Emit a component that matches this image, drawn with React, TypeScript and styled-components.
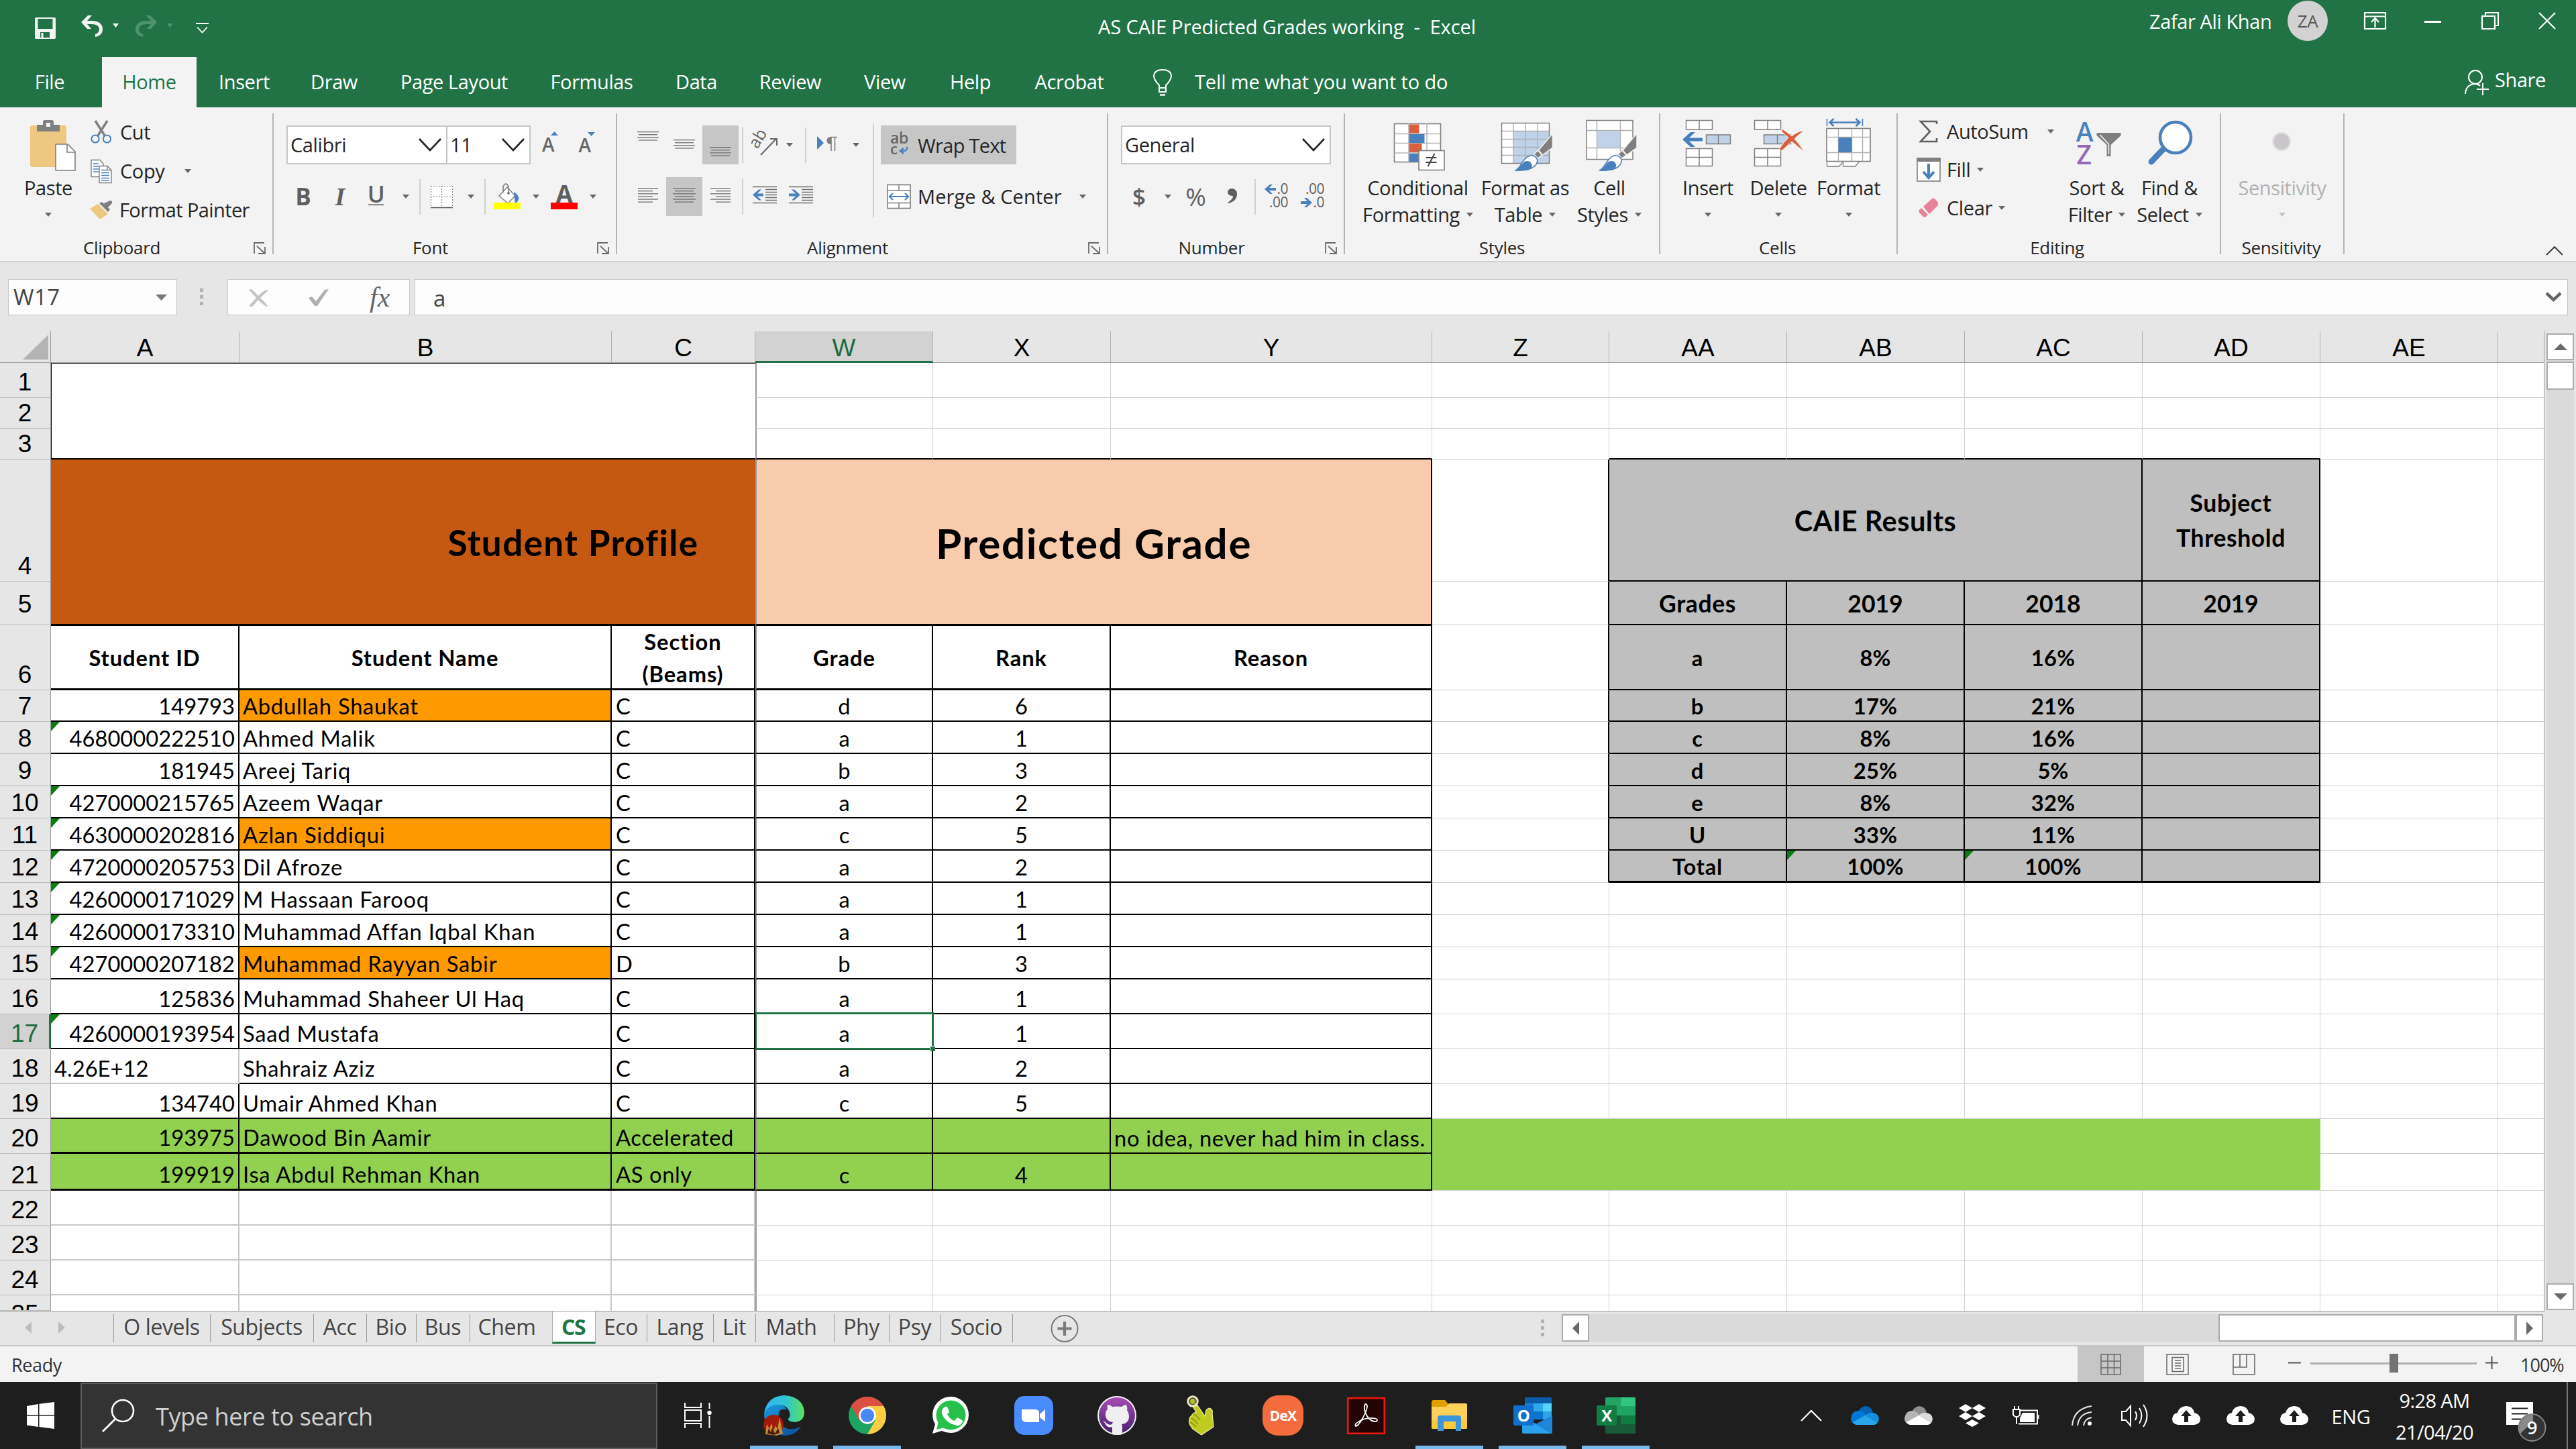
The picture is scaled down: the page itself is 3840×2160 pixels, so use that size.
import React from 'react';
import styled, { createGlobalStyle, css } from 'styled-components';

const UI = `"Open Sans", "Noto Sans", sans-serif`;
const CELL = `Lato, "Open Sans", sans-serif`;
const HEAD = `"Liberation Sans", Arial, sans-serif`;
const GREEN = '#217346';
const BLUE = '#4a80bb';
const GRAY = '#7f7f7f';

const Global = createGlobalStyle`
  *, *::before, *::after { box-sizing: border-box; }
  html, body { margin: 0; padding: 0; background: #1e1e1e; }
  body { font-family: ${UI}; font-size: 29px; letter-spacing: -0.4px; color: #262626; }
  svg { display: block; flex: none; overflow: visible; }
`;

const Window = styled.div`
  width: 3840px;
  height: 2160px;
  display: flex;
  flex-direction: column;
  overflow: hidden;
  white-space: nowrap;
  background: #e6e6e6;
`;

/* ---------- small shared parts ---------- */

interface IcoProps {
  box: [number, number, number, number];
  ml?: number;
  children: React.ReactNode;
}
const Svg = styled.svg<{ $ml?: number }>`
  margin-left: ${p => p.$ml ?? 0}px;
`;
const Ico = ({ box, ml, children }: IcoProps) => (
  <Svg $ml={ml} width={box[2]} height={box[3]} viewBox={box.join(' ')}>{children}</Svg>
);

const Caret = ({ ml, color = '#666' }: { ml?: number; color?: string }) => (
  <Svg $ml={ml} width={10} height={6} viewBox="0 0 10 6"><path d="M0 0h10L5 6z" fill={color} /></Svg>
);

/* ---------- title bar ---------- */

const TitleBar = styled.header`
  height: 85px;
  flex: none;
  display: flex;
  background: ${GREEN};
  color: #fff;
`;
const QuickAccess = styled.div`
  display: flex;
  align-items: flex-start;
  width: 1637px;
`;
const Title = styled.div`
  width: 1567px;
  line-height: 40px;
  padding-top: 20px;
  white-space: pre;
  letter-spacing: -0.1px;
`;
const Account = styled.div`
  width: 206px;
  line-height: 40px;
  padding-top: 12px;
`;
const Avatar = styled.div`
  width: 60px;
  height: 60px;
  margin-top: 1px;
  border-radius: 50%;
  background: #d2d2d2;
  color: #555;
  font-size: 26px;
  line-height: 60px;
  text-align: center;
`;

const TabBar = styled.nav`
  height: 75px;
  flex: none;
  display: flex;
  background: ${GREEN};
  color: #fff;
`;
const Tab = styled.div<{ $w: number; $on?: boolean }>`
  width: ${p => p.$w}px;
  text-align: center;
  line-height: 73px;
  ${p => p.$on && css`background: #f3f3f3; color: ${GREEN};`}
`;
const TellMe = styled.div`
  margin-left: 34px;
  line-height: 73px;
  width: 1893px;
  letter-spacing: -0.15px;
`;
const Share = styled.div`
  line-height: 68px;
  margin-left: 8px;
`;

/* ---------- ribbon ---------- */

const Ribbon = styled.section`
  height: 231px;
  flex: none;
  display: flex;
  padding-top: 9px;
  background: #f3f3f3;
  border-bottom: 2px solid #d2d2d2;
`;
const Group = styled.div<{ $w: number }>`
  width: ${p => p.$w}px;
  height: 210px;
  border-right: 2px solid #b4b4b4;
`;
const Body = styled.div<{ $pl?: number }>`
  height: 190px;
  display: flex;
  align-items: flex-start;
  padding-left: ${p => p.$pl ?? 0}px;
`;
const Foot = styled.div`
  height: 20px;
  line-height: 20px;
  display: flex;
  font-size: 26px;
  letter-spacing: -0.3px;
`;
const FootText = styled.div<{ $pr?: number }>`
  flex: 1;
  text-align: center;
  padding-right: ${p => p.$pr ?? 0}px;
`;
const Launch = styled.div`
  width: 43px;
  padding: 2px 0 0 15px;
`;
const Stack = styled.div<{ $mt?: number; $gap?: number; $w?: number }>`
  display: flex;
  flex-direction: column;
  margin-top: ${p => p.$mt ?? 0}px;
  gap: ${p => p.$gap ?? 0}px;
  ${p => p.$w && css`width: ${p.$w}px;`}
`;
const Line = styled.div<{ $h?: number }>`
  display: flex;
  align-items: center;
  height: ${p => p.$h ?? 58}px;
  line-height: 40px;
`;
const Word = styled.span<{ $ml?: number; $w?: number; $ls?: number }>`
  margin-left: ${p => p.$ml ?? 0}px;
  letter-spacing: ${p => p.$ls ?? -0.4}px;
  ${p => p.$w && css`width: ${p.$w}px;`}
`;
const Glyph = styled.span<{ $ml?: number; $w: number; $size: number; $font?: string; $weight?: number; $italic?: boolean }>`
  width: ${p => p.$w}px;
  margin-left: ${p => p.$ml ?? 0}px;
  text-align: center;
  color: #5f5f5f;
  font-family: ${p => p.$font ?? UI};
  font-size: ${p => p.$size}px;
  font-weight: ${p => p.$weight ?? 400};
  font-style: ${p => (p.$italic ? 'italic' : 'normal')};
  letter-spacing: 0;
`;
const Rule = styled.span<{ $ml: number; $h?: number }>`
  width: 2px;
  height: ${p => p.$h ?? 53}px;
  margin-left: ${p => p.$ml}px;
  background: #d0d0d0;
`;
const Combo = styled.div<{ $w: number; $ml?: number }>`
  width: ${p => p.$w}px;
  height: 58px;
  margin-left: ${p => p.$ml ?? 0}px;
  border: 2px solid #c6c6c6;
  background: #fff;
  display: flex;
  align-items: center;
  justify-content: space-between;
  padding: 0 7px 0 4px;
  line-height: 54px;
`;
const Toggle = styled.div<{ $w: number; $on?: boolean; $ml?: number }>`
  width: ${p => p.$w}px;
  height: 58px;
  margin-left: ${p => p.$ml ?? 0}px;
  display: flex;
  align-items: center;
  background: ${p => (p.$on ? '#c6c6c6' : 'transparent')};
`;
const Big = styled.div<{ $w: number; $ml?: number; $off?: boolean }>`
  width: ${p => p.$w}px;
  margin-left: ${p => p.$ml ?? 0}px;
  display: flex;
  flex-direction: column;
  align-items: center;
  color: ${p => (p.$off ? '#b1b1b1' : 'inherit')};
`;
const BigLabel = styled.div<{ $first?: boolean }>`
  height: 40px;
  line-height: 40px;
  margin-top: ${p => (p.$first ? 6 : 0)}px;
  display: flex;
  align-items: center;
  justify-content: center;
  gap: 10px;
`;

const Chevron = () => (
  <Ico box={[0, 0, 34, 20]}><path d="M1 1l16 17L33 1" fill="none" stroke="#262626" strokeWidth={2.6} /></Ico>
);
const Launcher = () => (
  <Launch><Ico box={[0, 0, 18, 18]}>
    <path d="M1 17V1h15M5 6l11 10M17 7v10H7" fill="none" stroke="#6a6a6a" strokeWidth={1.8} />
  </Ico></Launch>
);

/* ruled lines of a paragraph; each entry is [x, length] */
const Lines = ({ box, y, segs, ml }: { box: [number, number, number, number]; y: number; segs: [number, number][]; ml?: number }) => (
  <Ico box={box} ml={ml}>
    {segs.map(([x, w], i) => <rect key={i} x={x} y={y + i * 4.1} width={w} height={1.3} fill="#6f6f6f" />)}
  </Ico>
);

const BrushOver = ({ x }: { x: number }) => (
  <g>
    <path d={`M${x} 199l-21 25 6 7 15-11z`} fill={GRAY} stroke="#f3f3f3" strokeWidth={1.5} />
    <path d={`M${x - 22} 224l-6 6 6 6 6-5z`} fill={GRAY} stroke="#f3f3f3" strokeWidth={1.5} />
    <path d={`M${x - 56} 254c9-3 10-18 22-22 6-1 12 3 11 9-2 9-12 14-33 13z`} fill="#fff" stroke={BLUE} strokeWidth={1.5} />
    <path d={`M${x - 56} 254c8-2 10-14 18-14 6 0 9 6 6 11l-5 3z`} fill={BLUE} />
  </g>
);

const ClipboardGroup = () => (
  <Group $w={408}>
    <Body $pl={10}>
      <Big $w={124}>
        <Ico box={[32, 169, 80, 85]}>
          <rect x={45} y={187} width={54} height={62} rx={3} fill="#eec881" />
          <path d="M55 196v-10h9v-4a3 3 0 013-3h10a3 3 0 013 3v4h9v10z" fill={GRAY} />
          <rect x={69} y={183} width={6} height={6} fill="#f3f3f3" />
          <path d="M83 215h18l11 11v28H83z" fill="#fff" stroke={GRAY} strokeWidth={1.6} />
          <path d="M100 215v12h12" fill="none" stroke={GRAY} strokeWidth={1.6} />
        </Ico>
        <BigLabel $first>Paste</BigLabel>
        <BigLabel><Caret /></BigLabel>
      </Big>
      <Stack $mt={-1}>
        <Line>
          <Ico box={[134, 178, 34, 34]}>
            <path d="M142 178l14 22M160 178l-14 22" stroke={GRAY} strokeWidth={3.4} />
            <circle cx={142} cy={205} r={5.6} fill="none" stroke={BLUE} strokeWidth={2} />
            <circle cx={159.5} cy={205} r={5.6} fill="none" stroke={BLUE} strokeWidth={2} />
          </Ico>
          <Word $ml={11}>Cut</Word>
        </Line>
        <Line>
          <Ico box={[134, 235, 34, 35]}>
            <path d="M136 235.500h13l5 6v19h-18z" fill="#fff" stroke={GRAY} strokeWidth={1.4} />
            <path d="M139 241h8M139 245h8M139 249h8M139 253h8" stroke={BLUE} strokeWidth={1.4} />
            <path d="M148 244.500h12l6 6v19h-18z" fill="#fff" stroke={GRAY} strokeWidth={1.4} />
            <path d="M160 244.500v6h6" fill="none" stroke={GRAY} strokeWidth={1.4} />
            <path d="M151 250.500h8M151 254.500h12M151 258.500h12M151 262.500h12M151 266h12" stroke={BLUE} strokeWidth={1.3} />
          </Ico>
          <Word $ml={11} $w={96}>Copy</Word>
          <Caret />
        </Line>
        <Line>
          <Ico box={[134, 297, 34, 30]}>
            <path d="M134 310l12-7 15 15-12 8z" fill="#eec881" />
            <path d="M148 302l4-2 12 11-3 4zM155 302l9-4q4 0 3 4l-7 7z" fill={GRAY} />
          </Ico>
          <Word $ml={10} $ls={-0.6}>Format Painter</Word>
        </Line>
      </Stack>
    </Body>
    <Foot><FootText>Clipboard</FootText><Launcher /></Foot>
  </Group>
);

const FontGroup = () => (
  <Group $w={512}>
    <Body $pl={19}>
      <Stack $mt={18} $gap={19}>
        <Line>
          <Combo $w={240}>Calibri<Chevron /></Combo>
          <Combo $w={126} $ml={-2}>11<Chevron /></Combo>
          <Ico box={[803, 187, 34, 58]} ml={12}>
            <text x={817} y={226} fontFamily={UI} fontSize={28} fontWeight={600} fill="#666" textAnchor="middle">A</text>
            <path d="M821 202l5.500-6 5.500 6z" fill={BLUE} />
          </Ico>
          <Ico box={[858, 187, 34, 58]} ml={21}>
            <text x={871.5} y={227} fontFamily={UI} fontSize={28} fontWeight={600} fill="#666" textAnchor="middle">A</text>
            <path d="M876 197l5.500 6 5.500-6z" fill={BLUE} />
          </Ico>
        </Line>
        <Line>
          <Glyph $ml={8} $w={34} $size={35} $weight={700}>B</Glyph>
          <Glyph $ml={21} $w={34} $size={38} $weight={700} $italic $font={`"Liberation Serif", serif`}>I</Glyph>
          <Ico box={[543, 264, 34, 58]} ml={19}>
            <text x={560.5} y={302} fontFamily={UI} fontSize={35} fontWeight={600} fill="#5f5f5f" textAnchor="middle">U</text>
            <rect x={549} y={304.5} width={23} height={1.6} fill="#5f5f5f" />
          </Ico>
          <Caret ml={23} />
          <Rule $ml={15} />
          <Ico box={[641, 274, 35, 35]} ml={14}>
            <rect x={642} y={275} width={33} height={32} fill="#fff" />
            <path d="M642 275.500h33M642 291.500h33M642.500 275v32M658.500 275v32M674.500 275v32" stroke={GRAY} strokeWidth={1.2} strokeDasharray="2 2" />
            <path d="M642 307.500h33" stroke="#555" strokeWidth={1.6} />
          </Ico>
          <Caret ml={21} />
          <Rule $ml={15} />
          <Ico box={[736, 272, 40, 42]} ml={12}>
            <path d="M744 292l12-13 12 13-11 11z" fill="#fff" stroke={GRAY} strokeWidth={1.5} />
            <path d="M750 287v-9q4-8 8 0v10" fill="none" stroke={GRAY} strokeWidth={1.6} />
            <circle cx={758} cy={288} r={2} fill={GRAY} />
            <path d="M766 286q9 6 7 12l-5 7-1-10z" fill={BLUE} />
            <rect x={736} y={302} width={40} height={10} fill="#ff0" />
          </Ico>
          <Caret ml={18} />
          <Ico box={[821, 272, 40, 42]} ml={17}>
            <text x={841} y={302} fontFamily={UI} fontSize={36} fontWeight={700} fill="#5f5f5f" textAnchor="middle">A</text>
            <rect x={821} y={302} width={40} height={10} fill="#f00" />
          </Ico>
          <Caret ml={18} />
        </Line>
      </Stack>
    </Body>
    <Foot><FootText>Font</FootText><Launcher /></Foot>
  </Group>
);

const AlignmentGroup = () => (
  <Group $w={732}>
    <Body $pl={19}>
      <Stack $mt={18} $gap={19}>
        <Line>
          <Toggle $w={54}><Lines box={[939, 187, 54, 58]} y={196} segs={[[950, 32], [952, 28], [950, 32], [952, 28]]} /></Toggle>
          <Toggle $w={54}><Lines box={[993, 187, 54, 58]} y={208} segs={[[1004, 32], [1006, 28], [1004, 32], [1006, 28]]} /></Toggle>
          <Toggle $w={54} $on><Lines box={[1047, 187, 54, 58]} y={219} segs={[[1058, 32], [1060, 28], [1058, 32], [1060, 28]]} /></Toggle>
          <Rule $ml={5} />
          <Ico box={[1121, 187, 40, 58]} ml={13}>
            <text transform="translate(1129 223) rotate(-58)" fontFamily={UI} fontSize={25} fill="#666">ab</text>
            <path d="M1134 231l23-24M1148 207h10v10" fill="none" stroke="#666" strokeWidth={2} />
          </Ico>
          <Caret ml={11} />
          <Rule $ml={18} />
          <Ico box={[1218, 187, 32, 58]} ml={16}>
            <path d="M1218 203v20l10-10z" fill={BLUE} />
            <path d="M1248 204h-10a5 5 0 000 11h1V204z" fill={GRAY} />
            <path d="M1238 204.500h10M1239 204v21M1244.500 204v21" stroke={GRAY} strokeWidth={1.6} />
          </Ico>
          <Caret ml={21} />
        </Line>
        <Line>
          <Toggle $w={54}><Lines box={[939, 264, 54, 58]} y={280} segs={[[951, 30], [951, 22], [951, 30], [951, 22], [951, 30], [951, 22]]} /></Toggle>
          <Toggle $w={54} $on><Lines box={[993, 264, 54, 58]} y={280} segs={[[1003, 34], [1006, 28], [1003, 34], [1006, 28], [1003, 34], [1006, 28]]} /></Toggle>
          <Toggle $w={54}><Lines box={[1047, 264, 54, 58]} y={280} segs={[[1059, 30], [1067, 22], [1059, 30], [1067, 22], [1059, 30], [1067, 22]]} /></Toggle>
          <Rule $ml={5} />
          <Ico box={[1121, 264, 38, 58]} ml={13}>
            <path d="M1122 278.500h36M1122 302.500h36M1141 282.500h17M1141 286.500h17M1141 290.500h17M1141 294.500h17M1141 298.500h17" stroke="#6f6f6f" strokeWidth={1.3} />
            <path d="M1122 290.500l9-8h4l-6 6h9v4h-9l6 6h-4z" fill={BLUE} />
          </Ico>
          <Ico box={[1175, 264, 38, 58]} ml={16}>
            <path d="M1176 278.500h36M1176 302.500h36M1195 282.500h17M1195 286.500h17M1195 290.500h17M1195 294.500h17M1195 298.500h17" stroke="#6f6f6f" strokeWidth={1.3} />
            <path d="M1193 290.500l-9-8h-4l6 6h-10v4h10l-6 6h4z" fill={BLUE} />
          </Ico>
        </Line>
      </Stack>
      <Stack $mt={15}><Rule $ml={20} $h={140} /></Stack>
      <Stack $mt={18} $gap={19}>
        <Toggle $w={202} $on $ml={10}>
          <Ico box={[1326, 187, 28, 58]} ml={13}>
            <text x={1327} y={214} fontFamily={UI} fontSize={23} fill="#666" fontWeight={600}>ab</text>
            <text x={1327} y={230} fontFamily={UI} fontSize={22} fill="#666" fontWeight={600}>c</text>
            <path d="M1352 219q1 7-9 6m4-4l-5 4 5 4" fill="none" stroke={BLUE} strokeWidth={2.4} />
          </Ico>
          <Word $ml={14} $ls={-0.7}>Wrap Text</Word>
        </Toggle>
        <Line>
          <Ico box={[1322, 272, 36, 38]} ml={19}>
            <rect x={1323} y={273.5} width={34} height={35} fill="#fff" stroke={GRAY} strokeWidth={1.6} />
            <path d="M1323 282h34M1323 300.500h34M1340 273v9M1340 300.500v8" stroke={GRAY} strokeWidth={1.5} />
            <path d="M1326 291h28M1331 286l-5 5 5 5M1349 286l5 5-5 5" fill="none" stroke={BLUE} strokeWidth={2.2} />
          </Ico>
          <Word $ml={10} $w={241} $ls={0.1}>Merge &amp; Center</Word>
          <Caret />
        </Line>
      </Stack>
    </Body>
    <Foot><FootText>Alignment</FootText><Launcher /></Foot>
  </Group>
);

const Decimals = ({ x, dir }: { x: number; dir: 'in' | 'out' }) => (
  <Ico box={[x, 264, 36, 58]} ml={dir === 'in' ? 13 : 18}>
    <g fontFamily={UI} fontSize={21} fill="#5f5f5f" letterSpacing={-0.5}>
      <text x={x + 35} y={289} textAnchor="end">{dir === 'in' ? '.0' : '.00'}</text>
      <text x={x + 35} y={309} textAnchor="end">{dir === 'in' ? '.00' : '.0'}</text>
    </g>
    {dir === 'in'
      ? <path d={`M${x} 282l8-7h4l-5 5h10v4h-10l5 5h-4z`} fill={BLUE} />
      : <path d={`M${x + 17} 302l-8-7h-4l5 5H${x}v4h10l-5 5h4z`} fill={BLUE} />}
  </Ico>
);

const NumberGroup = () => (
  <Group $w={353}>
    <Body $pl={19}>
      <Stack $mt={18} $gap={19}>
        <Combo $w={313}>General<Chevron /></Combo>
        <Line>
          <Glyph $ml={13} $w={28} $size={35} $weight={600}>$</Glyph>
          <Caret ml={24} />
          <Glyph $ml={18} $w={37} $size={37}>%</Glyph>
          <Ico box={[1825, 264, 22, 58]} ml={24}>
            <path d="M1830 302q8-5 8-10-8 0-8-6 1-5 7-5 7 1 7 8 0 11-13 14z" fill="#5f5f5f" />
          </Ico>
          <Rule $ml={23} />
          <Decimals x={1885} dir="in" />
          <Decimals x={1939} dir="out" />
        </Line>
      </Stack>
    </Body>
    <Foot><FootText>Number</FootText><Launcher /></Foot>
  </Group>
);

const StylesGroup = () => (
  <Group $w={470}>
    <Body $pl={19}>
      <Big $w={179}>
        <Ico box={[2071.5, 169, 84, 85]}>
          <rect x={2078} y={184.5} width={69} height={57} fill="#fff" stroke={GRAY} strokeWidth={1.6} />
          <path d="M2078 199.500h69M2078 213.500h69M2078 228h69M2099.500 184v57M2126.500 184v57" stroke="#b5b5b5" strokeWidth={1.5} />
          <rect x={2100} y={185.5} width={15} height={13} fill="#d9603f" />
          <rect x={2100} y={200} width={23} height={13} fill={BLUE} />
          <rect x={2100} y={214} width={19} height={13} fill="#d9603f" />
          <rect x={2100} y={229} width={14} height={12} fill={BLUE} />
          <rect x={2114.5} y={224.5} width={38} height={29} fill="#fff" stroke={GRAY} strokeWidth={1.6} />
          <path d="M2125 235h16M2125 242h16M2138 229l-10 19" stroke="#444" strokeWidth={2} />
        </Ico>
        <BigLabel $first>Conditional</BigLabel>
        <BigLabel>Formatting<Caret /></BigLabel>
      </Big>
      <Big $w={141}>
        <Ico box={[2231.5, 169, 84, 85]}>
          <rect x={2238} y={183.5} width={71} height={60} fill="#fff" />
          <rect x={2255.5} y={196} width={54} height={48} fill="#c0d2e8" />
          <path d="M2238 195.500h71M2238 207.500h71M2238 219.500h71M2238 231.500h71M2255.500 184v59M2273.500 184v59M2291.500 184v59" stroke="#b0b0b0" strokeWidth={1.4} />
          <rect x={2238} y={183.5} width={71} height={60} fill="none" stroke={GRAY} strokeWidth={1.5} />
          <BrushOver x={2314} />
        </Ico>
        <BigLabel $first>Format as</BigLabel>
        <BigLabel>Table<Caret /></BigLabel>
      </Big>
      <Big $w={110}>
        <Ico box={[2357, 169, 84, 85]}>
          <rect x={2365} y={179.5} width={69} height={58} fill="#fff" stroke={GRAY} strokeWidth={1.5} />
          <path d="M2365 194.500h69M2365 220.500h69M2380.500 180v57M2415.500 180v57" stroke="#b0b0b0" strokeWidth={1.4} />
          <rect x={2381} y={195} width={34} height={25} fill="#c0d2e8" />
          <BrushOver x={2440} />
        </Ico>
        <BigLabel $first>Cell</BigLabel>
        <BigLabel>Styles<Caret /></BigLabel>
      </Big>
    </Body>
    <Foot><FootText>Styles</FootText></Foot>
  </Group>
);

const MiniCells = ({ x, y, rows, w = 39, fill = '#fff' }: { x: number; y: number; rows: number; w?: number; fill?: string }) => (
  <g fill={fill} stroke={GRAY} strokeWidth={1.5}>
    <rect x={x} y={y} width={w} height={13.5 * rows - (rows - 1)} />
    <path d={`M${x + w / 2} ${y}v${13.5 * rows - (rows - 1)}${rows > 1 ? `M${x} ${y + 13}h${w}` : ''}`} />
  </g>
);

const CellsGroup = () => (
  <Group $w={354}>
    <Body $pl={19}>
      <Big $w={104}>
        <Ico box={[2504, 169, 84, 85]}>
          <MiniCells x={2513.5} y={179.5} rows={1} />
          <MiniCells x={2543.5} y={201} rows={1} w={36} fill="#c0d2e8" />
          <MiniCells x={2513.5} y={221.5} rows={2} />
          <path d="M2508 208l12-11h7l-9 8.500h20v5h-20l9 8.500h-7z" fill={BLUE} />
        </Ico>
        <BigLabel $first>Insert</BigLabel>
        <BigLabel><Caret /></BigLabel>
      </Big>
      <Big $w={106}>
        <Ico box={[2609, 169, 84, 85]}>
          <MiniCells x={2615.5} y={179.5} rows={1} />
          <MiniCells x={2629.5} y={201} rows={1} w={40} fill="#c0d2e8" />
          <MiniCells x={2615.5} y={221.5} rows={2} />
          <path d="M2655 192q6 2 16 11 9-8 19-8-9 5-15 12 8 8 14 19-11-9-18-15-8 7-15 14-4 0-3-4 6-9 13-16-11-8-11-13z" fill="#d9603f" stroke="#f3f3f3" strokeWidth={1} />
        </Ico>
        <BigLabel $first>Delete</BigLabel>
        <BigLabel><Caret /></BigLabel>
      </Big>
      <Big $w={103}>
        <Ico box={[2713.5, 169, 84, 85]}>
          <path d="M2723 177v11M2776 177v11" stroke={BLUE} strokeWidth={1.6} />
          <path d="M2727 182.500h45M2733 177l-6 5.500 6 5.500M2766 177l6 5.500-6 5.500" fill="none" stroke={BLUE} strokeWidth={2.6} />
          <path d="M2723 241v7h18l6-7v7h18l6-7" fill="#fff" stroke={GRAY} strokeWidth={1.3} />
          <rect x={2722.5} y={191.5} width={65} height={49} fill="#fff" stroke={GRAY} strokeWidth={1.6} />
          <path d="M2723 204.500h64M2723 227.500h64M2740 192v48M2760 192v48M2776 192v48" stroke="#b0b0b0" strokeWidth={1.4} />
          <rect x={2740} y={205} width={20} height={22} fill={BLUE} />
        </Ico>
        <BigLabel $first>Format</BigLabel>
        <BigLabel><Caret /></BigLabel>
      </Big>
    </Body>
    <Foot><FootText $pr={3}>Cells</FootText></Foot>
  </Group>
);

const EditingGroup = () => (
  <Group $w={482}>
    <Body $pl={28}>
      <Stack $mt={-2} $w={221}>
        <Line $h={57}>
          <Ico box={[2857, 177, 36, 34]}>
            <path d="M2887 183v-4h-24l14 15-14 15h24v-5" fill="none" stroke="#5f5f5f" strokeWidth={2.6} />
          </Ico>
          <Word $ml={9} $w={150}>AutoSum</Word>
          <Caret />
        </Line>
        <Line $h={57}>
          <Ico box={[2857, 233, 36, 36]}>
            <rect x={2858} y={234} width={34} height={34} fill="#fff" stroke={GRAY} strokeWidth={1.6} />
            <rect x={2857} y={233} width={36} height={6} fill={GRAY} />
            <path d="M2875 242v20M2867 254l8 9 8-9" fill="none" stroke={BLUE} strokeWidth={4} />
          </Ico>
          <Word $ml={9}>Fill</Word>
          <Caret ml={10} />
        </Line>
        <Line $h={57}>
          <Ico box={[2857, 292, 36, 32]}>
            <path d="M2867 306l13-12q3-1 5 1l4 5q1 3-1 5l-12 12zM2864 308l10 10-3 3q-2 2-4 0l-6-6q-1-2 0-4z" fill="#e8819a" />
          </Ico>
          <Word $ml={9}>Clear</Word>
          <Caret ml={9} />
        </Line>
      </Stack>
      <Big $w={95}>
        <Ico box={[3083.5, 169, 84, 85]}>
          <g fontFamily={UI} fontSize={39} fontWeight={600} textAnchor="middle">
            <text x={3107} y={211} fill={BLUE}>A</text>
            <text x={3106} y={245} fill="#9668b8">Z</text>
          </g>
          <path d="M3125 198h36v4l-15 14v17h-6v-17l-15-14z" fill={GRAY} />
          <path d="M3130 201l13 14v15" fill="none" stroke="#fff" strokeWidth={1.4} />
        </Ico>
        <BigLabel $first>Sort &amp;</BigLabel>
        <BigLabel>Filter<Caret /></BigLabel>
      </Big>
      <Big $w={108} $ml={7}>
        <Ico box={[3192, 169, 84, 85]}>
          <path d="M3226 221l-19 20" stroke={BLUE} strokeWidth={9} strokeLinecap="round" />
          <circle cx={3243} cy={205} r={23} fill="#fff" stroke={BLUE} strokeWidth={4.6} />
        </Ico>
        <BigLabel $first>Find &amp;</BigLabel>
        <BigLabel>Select<Caret /></BigLabel>
      </Big>
    </Body>
    <Foot><FootText $pr={5}>Editing</FootText></Foot>
  </Group>
);

const SensitivityGroup = () => (
  <Group $w={184}>
    <Body>
      <Big $w={182} $off>
        <Ico box={[3360, 169, 84, 85]}>
          <defs><radialGradient id="dot"><stop offset="0.7" stopColor="#c9c6c9" /><stop offset="1" stopColor="#f3f3f3" /></radialGradient></defs>
          <circle cx={3401} cy={211} r={15} fill="url(#dot)" />
        </Ico>
        <BigLabel $first>Sensitivity</BigLabel>
        <BigLabel><Caret color="#c4c4c4" /></BigLabel>
      </Big>
    </Body>
    <Foot><FootText $pr={3}>Sensitivity</FootText></Foot>
  </Group>
);

const Collapse = styled.div`
  margin-left: 300px;
  padding-top: 197px;
`;

/* ---------- formula bar ---------- */

const FormulaBar = styled.section`
  height: 103px;
  flex: none;
  display: flex;
  padding: 25px 12px 0;
  font-size: 33px;
  color: #444;
`;
const Field = styled.div<{ $w: number; $ml?: number }>`
  width: ${p => p.$w}px;
  height: 54px;
  margin-left: ${p => p.$ml ?? 0}px;
  display: flex;
  align-items: center;
  background: #fdfdfd;
  border: 1px solid #c6c6c6;
  line-height: 52px;
`;
const FieldText = styled.span<{ $ml: number; $w: number; $mt?: number }>`
  margin-left: ${p => p.$ml}px;
  margin-top: ${p => p.$mt ?? 0}px;
  width: ${p => p.$w}px;
  letter-spacing: 0.5px;
`;
const Fx = styled.span`
  margin-left: 61px;
  font: italic 42px/50px "Liberation Serif", serif;
  letter-spacing: 0;
  color: #666;
`;
const Grip = styled.div<{ $ml: number; $mt: number }>`
  margin: ${p => p.$mt}px 0 0 ${p => p.$ml}px;
  width: 5px;
  display: flex;
  flex-direction: column;
  gap: 5px;
  &::before { content: ''; height: 5px; background: #b1b1b1; }
  &::after { content: ''; height: 5px; background: #b1b1b1; }
`;
const GripDot = styled.i`
  height: 5px;
  background: #b1b1b1;
`;

/* ---------- sheet ---------- */

const colW = [76, 281, 555, 214, 265, 265, 479, 264, 265, 265, 265, 265, 265, 69];
const rowEnd = [541, 593, 639, 685, 867, 932, 1029, 1076, 1124, 1172, 1220, 1268, 1316, 1364, 1412, 1460, 1512, 1564, 1616, 1668, 1720, 1775, 1827, 1879, 1931, 1954];
const rowH = rowEnd.map((e, i) => (i === 0 ? 47 : e - rowEnd[i - 1]));
const colNames = ['A', 'B', 'C', 'W', 'X', 'Y', 'Z', 'AA', 'AB', 'AC', 'AD', 'AE', ''];

const SheetArea = styled.main`
  height: 1461px;
  flex: none;
  display: flex;
`;
const Grid = styled.div`
  width: 3793px;
  height: 1461px;
  display: grid;
  grid-template-columns: ${colW.map(w => `${w}px`).join(' ')};
  grid-template-rows: ${rowH.map(h => `${h}px`).join(' ')};
  overflow: hidden;
  background: #fff;
  border-right: 1px solid #9b9b9b;
  border-bottom: 1px solid #9b9b9b;
`;
const Corner = styled.div`
  background: #e6e6e6;
  border-right: 1px solid #9b9b9b;
  border-bottom: 1px solid #9b9b9b;
  padding: 5px 0 0 34px;
`;
const ColHead = styled.div<{ $on?: boolean }>`
  background: ${p => (p.$on ? '#d2d2d2' : '#e6e6e6')};
  color: ${p => (p.$on ? '#1d6a3f' : '#000')};
  border-right: 1px solid #b0b0b0;
  border-bottom: ${p => (p.$on ? `3px solid ${GREEN}` : '1px solid #9b9b9b')};
  font: 37px/50px ${HEAD};
  letter-spacing: 0;
  text-align: center;
`;
const RowHead = styled.div<{ $r: number; $on?: boolean }>`
  grid-area: ${p => p.$r + 1} / 1;
  display: flex;
  align-items: ${p => (p.$r === 25 ? 'flex-start' : 'flex-end')};
  justify-content: center;
  overflow: hidden;
  background: ${p => (p.$on ? '#d2d2d2' : '#e6e6e6')};
  color: ${p => (p.$on ? '#1d6a3f' : '#000')};
  border-right: ${p => (p.$on ? `3px solid ${GREEN}` : '1px solid #9b9b9b')};
  border-bottom: 1px solid #bdbdbd;
  font: 37px/44px ${HEAD};
  letter-spacing: 0;
  padding: ${p => (p.$r === 25 ? 6 : 0)}px ${p => (p.$on ? 0 : 1)}px ${p => (p.$r === 5 ? 8 : 0)}px 0;
`;

interface CellSpec {
  c: number; r: number; cs?: number; rs?: number;
  t?: string; bg?: string; bold?: boolean; size?: number;
  h?: 'left' | 'center' | 'right'; mid?: boolean; lh?: number; pl?: number;
  right?: string; bottom?: string; left?: string; top?: string; err?: boolean; ls?: number;
}
const Cell = styled.div<{ $s: CellSpec }>`
  grid-area: ${p => `${p.$s.r + 1} / ${p.$s.c + 1} / span ${p.$s.rs ?? 1} / span ${p.$s.cs ?? 1}`};
  display: flex;
  position: relative;
  min-width: 0;
  align-items: ${p => (p.$s.mid ? 'center' : 'flex-end')};
  justify-content: ${p => ({ left: 'flex-start', center: 'center', right: 'flex-end' }[p.$s.h ?? 'left'])};
  text-align: ${p => p.$s.h ?? 'left'};
  white-space: pre;
  padding: ${p => (p.$s.mid ? 2 : 0)}px 5px 0 ${p => p.$s.pl ?? 5}px;
  background: ${p => p.$s.bg ?? '#fff'};
  border-right: ${p => p.$s.right ?? '1px solid #d4d4d4'};
  border-bottom: ${p => p.$s.bottom ?? '1px solid #d0d0d0'};
  border-left: ${p => p.$s.left ?? 'none'};
  border-top: ${p => p.$s.top ?? 'none'};
  color: #000;
  font-family: ${CELL};
  font-size: ${p => p.$s.size ?? 32.7}px;
  font-weight: ${p => (p.$s.bold ? 700 : 400)};
  line-height: ${p => p.$s.lh ?? 43}px;
  letter-spacing: ${p => p.$s.ls ?? 0}px;
  ${p => p.$s.err && css`
    &::before {
      content: '';
      position: absolute;
      left: 0;
      top: 0;
      border-top: 14px solid #0a7d12;
      border-right: 13px solid transparent;
    }
  `}
`;
const Selection = styled.div`
  grid-area: 18 / 5;
  position: relative;
  margin: -3px -1px -1px 0;
  border: 3px solid ${GREEN};
  border-left-width: 2px;
  z-index: 2;
  &::after {
    content: '';
    position: absolute;
    right: -5px;
    bottom: -5px;
    width: 8px;
    height: 8px;
    background: ${GREEN};
    border: 1px solid #fff;
    border-right: 0;
    border-bottom: 0;
  }
`;

const K2 = '2px solid #000';
const K3 = '3px solid #000';
const FZ = '2px solid #9a9a9a';
const ORANGE = '#ff9900';
const LIME = '#92d050';
const SILVER = '#bfbfbf';

type Student = [string, string, string, string, string, string, boolean?, boolean?];
const students: Student[] = [
  ['149793', 'Abdullah Shaukat', 'C', 'd', '6', '', false, true],
  ['4680000222510', 'Ahmed Malik', 'C', 'a', '1', '', true],
  ['181945', 'Areej Tariq', 'C', 'b', '3', ''],
  ['4270000215765', 'Azeem Waqar', 'C', 'a', '2', '', true],
  ['4630000202816', 'Azlan Siddiqui', 'C', 'c', '5', '', true, true],
  ['4720000205753', 'Dil Afroze', 'C', 'a', '2', '', true],
  ['4260000171029', 'M Hassaan Farooq', 'C', 'a', '1', '', true],
  ['4260000173310', 'Muhammad Affan Iqbal Khan', 'C', 'a', '1', '', true],
  ['4270000207182', 'Muhammad Rayyan Sabir', 'D', 'b', '3', '', true, true],
  ['125836', 'Muhammad Shaheer Ul Haq', 'C', 'a', '1', ''],
  ['4260000193954', 'Saad Mustafa', 'C', 'a', '1', '', true],
  ['4.26E+12', 'Shahraiz Aziz', 'C', 'a', '2', ''],
  ['134740', 'Umair Ahmed Khan', 'C', 'c', '5', ''],
  ['193975', 'Dawood Bin Aamir', 'Accelerated', '', '', 'no idea, never had him in class.'],
  ['199919', 'Isa Abdul Rehman Khan', 'AS only', 'c', '4', ''],
];
const results = [
  ['a', '8%', '16%'], ['b', '17%', '21%'], ['c', '8%', '16%'], ['d', '25%', '5%'],
  ['e', '8%', '32%'], ['U', '33%', '11%'], ['Total', '100%', '100%'],
];

function buildCells(): CellSpec[] {
  const out: CellSpec[] = [];
  // A1:C3, the two title bands and the headings
  out.push({ c: 1, r: 1, cs: 3, rs: 3, left: '1px solid #000', top: '1px solid #000', right: 'none', bottom: K2 });
  out.push({ c: 1, r: 4, cs: 3, rs: 2, t: 'Student Profile', bg: '#c55911', bold: true, size: 53, ls: 1.4, mid: true, h: 'center', pl: 512, right: 'none', bottom: K2, lh: 64 });
  out.push({ c: 4, r: 4, cs: 3, rs: 2, t: 'Predicted Grade', bg: '#f8cbad', bold: true, size: 62, ls: 1.6, mid: true, h: 'center', left: FZ, right: K2, bottom: K2, lh: 74 });
  ['Student ID', 'Student Name', 'Section\n(Beams)', 'Grade', 'Rank', 'Reason'].forEach((t, i) =>
    out.push({ c: i + 1, r: 6, t, bold: true, ls: 0.95, mid: true, h: 'center', lh: 48, right: K2, bottom: K3, top: '1px solid #000', left: i === 3 ? FZ : undefined }));
  students.forEach(([id, name, sec, grade, rank, why, err, hot], i) => {
    const r = i + 7;
    const bg = r >= 20 ? LIME : undefined;
    const bottom = r === 20 || r === 21 ? K3 : K2;
    const odd = r === 18;
    out.push({ c: 1, r, t: id, h: odd ? 'left' : 'right', bg, err, right: odd ? '2px solid #c8c8c8' : K2, bottom: odd ? '2px solid #c8c8c8' : bottom });
    out.push({ c: 2, r, t: name, bg: hot ? ORANGE : bg, right: K2, bottom, ls: 0.75 });
    out.push({ c: 3, r, t: sec, bg, right: K2, bottom, ls: 0.6, pl: 6 });
    out.push({ c: 4, r, t: grade, h: 'center', bg, left: FZ, right: K2, bottom: K2 });
    out.push({ c: 5, r, t: rank, h: 'center', bg, right: K2, bottom: K2 });
    out.push({ c: 6, r, t: why, bg, right: K2, bottom: K2, ls: 0.7 });
  });
  [20, 21].forEach(r => out.push({ c: 7, r, cs: 5, bg: LIME, right: 'none', bottom: r === 20 ? 'none' : undefined }));
  // CAIE results block, AA4:AD12
  out.push({ c: 8, r: 4, cs: 3, t: 'CAIE Results', bg: SILVER, bold: true, size: 41.5, ls: 0.5, mid: true, h: 'center', right: K2, bottom: K2 });
  out.push({ c: 11, r: 4, t: 'Subject\nThreshold', bg: SILVER, bold: true, size: 35.5, ls: 0.6, lh: 52, mid: true, h: 'center', right: K2, bottom: K2 });
  ['Grades', '2019', '2018', '2019'].forEach((t, i) =>
    out.push({ c: 8 + i, r: 5, t, bg: SILVER, bold: true, size: 35.5, ls: i ? 0 : 0.6, mid: true, h: 'center', right: K2, bottom: K2 }));
  results.forEach((row, i) => [...row, ''].forEach((t, j) =>
    out.push({ c: 8 + j, r: 6 + i, t, bg: SILVER, bold: true, mid: i === 0, ls: j ? 0.2 : 0.8, h: 'center', right: K2, bottom: i === 6 ? K3 : K2, err: i === 6 && (j === 1 || j === 2) })));
  // plain cells everywhere else
  const used = new Set<string>();
  out.forEach(s => {
    for (let a = 0; a < (s.cs ?? 1); a++) for (let b = 0; b < (s.rs ?? 1); b++) used.add(`${s.c + a},${s.r + b}`);
  });
  for (let r = 1; r <= 25; r++) for (let c = 1; c <= 13; c++) {
    if (used.has(`${c},${r}`)) continue;
    const frozen = c <= 3;
    const overBlock = r === 3 && ((c >= 4 && c <= 6) || (c >= 8 && c <= 11));
    const besideBlock = c === 7 && r >= 4 && r <= 12;
    out.push({
      c, r,
      left: c === 4 ? FZ : undefined,
      right: frozen ? '2px solid #c8c8c8' : c === 13 ? 'none' : besideBlock ? K2 : undefined,
      bottom: r === 25 ? 'none' : frozen ? '2px solid #c8c8c8' : overBlock ? K2 : undefined,
    });
  }
  return out;
}
const cells = buildCells();

const VScroll = styled.div`
  width: 41px;
  margin: 3px 0 0 3px;
  height: 1456px;
  display: flex;
  flex-direction: column;
  background: #dadada;
`;
const ScrollBtn = styled.div<{ $w?: number; $h?: number; $mt?: number }>`
  width: ${p => p.$w ?? 41}px;
  height: ${p => p.$h ?? 40}px;
  margin-top: ${p => p.$mt ?? 0}px;
  flex: none;
  display: flex;
  align-items: center;
  justify-content: center;
  background: #fff;
  border: 2px solid #ababab;
`;
const Spacer = styled.div`
  flex: 1;
`;

/* ---------- sheet tabs and status bar ---------- */

const SheetBar = styled.div`
  height: 52px;
  flex: none;
  display: flex;
  background: #e6e6e6;
  border-bottom: 2px solid #c6c6c6;
`;
const SheetNav = styled.div`
  width: 170px;
  display: flex;
  padding: 15px 0 0 37px;
  gap: 40px;
  height: 46px;
  background: linear-gradient(#999, #999) right 4px / 1px 42px no-repeat;
`;
const SheetTab = styled.div<{ $w: number; $on?: boolean; $bare?: boolean }>`
  width: ${p => p.$w}px;
  height: 46px;
  text-align: center;
  font-size: 32px;
  line-height: 46px;
  color: #444;
  padding-right: 2px;
  ${p => !p.$bare && !p.$on && css`
    background: linear-gradient(#999, #999) right 4px / 1px 42px no-repeat;
  `}
  ${p => p.$on && css`
    background: #fff;
    color: ${GREEN};
    font-weight: 700;
    letter-spacing: -1.5px;
    height: 48px;
    border: 1px solid #ababab;
    border-top: 0;
    border-bottom: 3px solid ${GREEN};
  `}
`;
const HScroll = styled.div`
  width: 1463px;
  height: 41px;
  margin: 4px 0 0 26px;
  display: flex;
  background: #dadada;
`;

const StatusBar = styled.footer`
  height: 53px;
  flex: none;
  display: flex;
  background: #f3f3f3;
  font-size: 27px;
  color: #333;
`;
const Ready = styled.div`
  width: 3097px;
  padding-left: 17px;
  line-height: 55px;
`;
const ViewBtn = styled.div<{ $on?: boolean }>`
  width: 99px;
  display: flex;
  align-items: center;
  justify-content: center;
  background: ${p => (p.$on ? '#c6c6c6' : 'transparent')};
`;
const Zoom = styled.div`
  margin-left: 31px;
  line-height: 55px;
  letter-spacing: -1px;
`;

/* ---------- taskbar ---------- */

const TaskBar = styled.div`
  height: 100px;
  flex: none;
  display: flex;
  background: #1e1e1e;
  color: #fff;
`;
const Start = styled.div`
  width: 120px;
  display: flex;
  align-items: center;
  justify-content: center;
`;
const Search = styled.div`
  width: 860px;
  height: 99px;
  margin-top: 1px;
  display: flex;
  align-items: center;
  padding-left: 30px;
  background: #333;
  border: 2px solid #5c5c5c;
  color: #d0d0d0;
  font-size: 36px;
  gap: 31px;
`;
const SearchText = styled.span`
  padding-top: 2px;
`;
const TaskView = styled.div`
  width: 138px;
  display: flex;
  align-items: center;
  padding-left: 40px;
`;
const Apps = styled.div`
  display: flex;
  gap: 23px;
  width: 1541px;
`;
const TaskApp = styled.div<{ $open?: boolean }>`
  width: 101px;
  height: 100px;
  display: flex;
  align-items: center;
  justify-content: center;
  border-bottom: 5px solid ${p => (p.$open ? '#76b9ed' : 'transparent')};
  border-top: 5px solid transparent;
`;
const TraySlot = styled.div<{ $w?: number }>`
  width: ${p => p.$w ?? 80}px;
  display: flex;
  align-items: center;
  justify-content: center;
`;
const TrayText = styled.span`
  padding: 2px 0 0 3px;
`;
const Clock = styled.div`
  width: 170px;
  margin-left: -2px;
  text-align: center;
  line-height: 47px;
  padding-top: 4px;
  letter-spacing: -0.6px;
`;

const Cloud = ({ a, b, c, d }: { a: string; b: string; c: string; d: string }) => (
  <svg width={42} height={28} viewBox="0 0 42 28">
    <path d="M10 13Q12 1 22 0q9 1 11 10l-11 8z" fill={a} />
    <path d="M9 27Q0 27 0 18 2 7 11 7q6 0 10 5l6 6z" fill={b} />
    <path d="M20 14l8-4q13-1 14 9-1 9-9 9z" fill={c} />
    <path d="M3 24l18-10 18 11q-2 3-6 3H9q-4 0-6-4z" fill={d} />
  </svg>
);
const UpCloud = () => (
  <svg width={42} height={28} viewBox="0 0 42 28">
    <path d="M9 28Q0 27 0 19q1-8 8-9Q11 0 21 0t12 10q8 2 9 9 0 8-9 9z" fill="#fff" />
    <path d="M21 6l8 9h-5v9h-6v-9h-5z" fill="#1e1e1e" />
  </svg>
);

const Office = ({ letter, dark, children }: { letter: string; dark: string; children: React.ReactNode }) => (
  <svg width={60} height={56} viewBox="0 0 60 56">
    {children}
    <rect x={1} y={13} width={30} height={30} rx={2} fill={dark} />
    <text x={16} y={37} textAnchor="middle" fontFamily={UI} fontWeight={700} fontSize={24} fill="#fff">{letter}</text>
  </svg>
);

export default function App() {
  return (
    <Window>
      <Global />
      <TitleBar>
        <QuickAccess>
          <Ico box={[52, 0, 31, 85]} ml={52}>
            <path fillRule="evenodd" d="M54 26h27a2 2 0 012 2v28a2 2 0 01-2 2H54a2 2 0 01-2-2V28a2 2 0 012-2zM56.500 28v15h22V28zM60 48v8h14v-8z" fill="#f3f3f3" />
            <rect x={61.5} y={49} width={3} height={7} fill="#f3f3f3" />
          </Ico>
          <Ico box={[121, 0, 32, 85]} ml={38}>
            <path d="M121 33l10-10h6l-7 8h8q15 1 15 13 0 9-11 11v-4q6-2 6-8-1-7-11-7h-7l6 7h-6z" fill="#f3f3f3" />
          </Ico>
          <Ico box={[168, 0, 10, 85]} ml={15}><path d="M168 35h9l-4.500 6z" fill="#fff" /></Ico>
          <Ico box={[202, 0, 32, 85]} ml={24}>
            <path d="M234 33l-10-10h-6l7 8h-8q-15 1-15 13 0 9 11 11v-4q-6-2-6-8 1-7 11-7h7l-6 7h6z" fill="#4f9270" />
          </Ico>
          <Ico box={[249, 0, 10, 85]} ml={15}><path d="M249 35h9l-4.500 6z" fill="#4f9270" /></Ico>
          <Ico box={[292, 0, 20, 85]} ml={33}>
            <path d="M292 35h19M294 40.500l7.500 8 7.500-8" fill="none" stroke="#fff" strokeWidth={1.8} />
          </Ico>
        </QuickAccess>
        <Title>{'AS CAIE Predicted Grades working  -  Excel'}</Title>
        <Account>Zafar Ali Khan</Account>
        <Avatar>ZA</Avatar>
        <Ico box={[3524, 0, 34, 85]} ml={54}>
          <path d="M3525 19h31v24h-31zM3525 24.500h31M3540.500 41V28M3535 33l5.500-6 5.500 6" fill="none" stroke="#fff" strokeWidth={2.2} />
        </Ico>
        <Ico box={[3614, 0, 25, 85]} ml={56}><rect x={3614} y={31} width={25} height={3} fill="#fff" /></Ico>
        <Ico box={[3699, 0, 26, 85]} ml={60}>
          <path d="M3700 24h19v19h-19zM3705 24v-5h19v19h-5" fill="none" stroke="#fff" strokeWidth={2.2} />
        </Ico>
        <Ico box={[3784, 0, 26, 85]} ml={59}><path d="M3785 19l24 24M3809 19l-24 24" stroke="#fff" strokeWidth={2.2} /></Ico>
      </TitleBar>

      <TabBar>
        <Tab $w={148}>File</Tab>
        <Tab $w={4} />
        <Tab $w={141} $on>Home</Tab>
        <Tab $w={142}>Insert</Tab>
        <Tab $w={126}>Draw</Tab>
        <Tab $w={232}>Page Layout</Tab>
        <Tab $w={178}>Formulas</Tab>
        <Tab $w={134}>Data</Tab>
        <Tab $w={146}>Review</Tab>
        <Tab $w={136}>View</Tab>
        <Tab $w={119}>Help</Tab>
        <Tab $w={176}>Acrobat</Tab>
        <Ico box={[1719, 85, 28, 75]} ml={37}>
          <path d="M1728 131v-4q-8-8-8-14 1-9 13-9t13 9q0 6-8 14v4zM1728 131v6h10v-6" fill="none" stroke="#fff" strokeWidth={2} />
          <path d="M1729 141.500h8" stroke="#fff" strokeWidth={2.4} />
        </Ico>
        <TellMe>Tell me what you want to do</TellMe>
        <Ico box={[3674, 85, 37, 75]}>
          <ellipse cx={3690} cy={115} rx={10} ry={10} fill="none" stroke="#fff" strokeWidth={2} />
          <path d="M3675 140q1-14 14-15 5 0 8 3M3701 124v18M3692 133h18" fill="none" stroke="#fff" strokeWidth={2} />
        </Ico>
        <Share>Share</Share>
      </TabBar>

      <Ribbon>
        <ClipboardGroup />
        <FontGroup />
        <AlignmentGroup />
        <NumberGroup />
        <StylesGroup />
        <CellsGroup />
        <EditingGroup />
        <SensitivityGroup />
        <Collapse><Ico box={[0, 0, 26, 15]}><path d="M1 14L13 2l12 12" fill="none" stroke="#444" strokeWidth={2.2} /></Ico></Collapse>
      </Ribbon>

      <FormulaBar>
        <Field $w={252}>
          <FieldText $ml={7} $w={212}>W17</FieldText>
          <Svg width={17} height={9} viewBox="0 0 17 9"><path d="M0 0h17L8.500 9z" fill="#777" /></Svg>
        </Field>
        <Grip $ml={34} $mt={14}><GripDot /></Grip>
        <Field $w={272} $ml={36}>
          <Ico box={[371, 429, 30, 27]} ml={31}>
            <path d="M371 431q3-2 5 0 5 4 9 9 6-7 13-9l2 1q-6 5-12 11 7 6 11 12l-2 1q-8-5-12-10-4 5-9 10-4 1-4-2 5-6 10-11-6-6-11-12z" fill="#c4c4c4" />
          </Ico>
          <Ico box={[460, 429, 30, 27]} ml={59}>
            <path d="M460 443l5-2 6 7 13-17 6-1-17 25h-4z" fill="#b0b0b0" />
          </Ico>
          <Fx>fx</Fx>
        </Field>
        <Field $w={3210} $ml={7}>
          <FieldText $ml={27} $w={3148} $mt={3}>a</FieldText>
          <Svg width={25} height={16} viewBox="0 0 25 16"><path d="M2 2l10.500 10L23 2" fill="none" stroke="#666" strokeWidth={4.5} /></Svg>
        </Field>
      </FormulaBar>

      <SheetArea>
        <Grid>
          <Corner><svg width={38} height={37} viewBox="0 0 38 37"><path d="M38 0v37H0z" fill="#b4b4b4" /></svg></Corner>
          {colNames.map((n, i) => <ColHead key={i} $on={n === 'W'}>{n}</ColHead>)}
          {rowH.slice(1).map((_, i) => <RowHead key={i} $r={i + 1} $on={i === 16}>{i + 1}</RowHead>)}
          {cells.map(s => <Cell key={`${s.c}-${s.r}`} $s={s}>{s.t}</Cell>)}
          <Selection />
        </Grid>
        <VScroll>
          <ScrollBtn><svg width={20} height={10} viewBox="0 0 20 10"><path d="M0 10L10 0l10 10z" fill="#6a6a6a" /></svg></ScrollBtn>
          <ScrollBtn $h={42} $mt={2} />
          <Spacer />
          <ScrollBtn><svg width={20} height={10} viewBox="0 0 20 10"><path d="M0 0l10 10L20 0z" fill="#6a6a6a" /></svg></ScrollBtn>
        </VScroll>
      </SheetArea>

      <SheetBar>
        <SheetNav>
          <svg width={10} height={18} viewBox="0 0 10 18"><path d="M10 0v18L0 9z" fill="#bdbdbd" /></svg>
          <svg width={10} height={18} viewBox="0 0 10 18"><path d="M0 0v18l10-9z" fill="#bdbdbd" /></svg>
        </SheetNav>
        <SheetTab $w={144}>O levels</SheetTab>
        <SheetTab $w={154}>Subjects</SheetTab>
        <SheetTab $w={79}>Acc</SheetTab>
        <SheetTab $w={74}>Bio</SheetTab>
        <SheetTab $w={80}>Bus</SheetTab>
        <SheetTab $w={111} $bare>Chem</SheetTab>
        <SheetTab $w={11} $bare />
        <SheetTab $w={65} $on>CS</SheetTab>
        <SheetTab $w={77}>Eco</SheetTab>
        <SheetTab $w={99}>Lang</SheetTab>
        <SheetTab $w={63}>Lit</SheetTab>
        <SheetTab $w={107} $bare>Math</SheetTab>
        <SheetTab $w={10} />
        <SheetTab $w={82}>Phy</SheetTab>
        <SheetTab $w={77}>Psy</SheetTab>
        <SheetTab $w={107}>Socio</SheetTab>
        <Ico box={[1566, 1955, 42, 50]} ml={56}>
          <circle cx={1587} cy={1980.5} r={19.5} fill="none" stroke="#7a7a7a" strokeWidth={2} />
          <path d="M1576.500 1980.500h21M1587 1970v21" stroke="#7a7a7a" strokeWidth={4.2} />
        </Ico>
        <Grip $ml={689} $mt={12}><GripDot /></Grip>
        <HScroll>
          <ScrollBtn $h={41}><svg width={10} height={20} viewBox="0 0 10 20"><path d="M10 0v20L0 10z" fill="#6a6a6a" /></svg></ScrollBtn>
          <Spacer />
          <ScrollBtn $h={41} $w={443} />
          <ScrollBtn $h={41}><svg width={10} height={20} viewBox="0 0 10 20"><path d="M0 0v20l10-10z" fill="#6a6a6a" /></svg></ScrollBtn>
        </HScroll>
      </SheetBar>

      <StatusBar>
        <Ready>Ready</Ready>
        <ViewBtn $on>
          <svg width={31} height={32} viewBox="0 0 31 32"><path d="M1 1h29v30H1zM1 11h29M1 21h29M11 1v30M20.500 1v30" fill="none" stroke="#6a6a6a" strokeWidth={1.5} /></svg>
        </ViewBtn>
        <ViewBtn>
          <svg width={34} height={32} viewBox="0 0 34 32"><path d="M1 1h32v30H1zM9 5.500h17v21H9zM13 10h9M13 14h9M13 18h9M13 22h9" fill="none" stroke="#6a6a6a" strokeWidth={1.5} /></svg>
        </ViewBtn>
        <ViewBtn>
          <svg width={34} height={32} viewBox="0 0 34 32"><path d="M1 1h32v30H1zM1 20h20V1M11 1v19" fill="none" stroke="#6a6a6a" strokeWidth={1.6} /></svg>
        </ViewBtn>
        <Ico box={[3411, 2007, 315, 53]} ml={17}>
          <path d="M3411 2031.500h19M3705 2031.500h19M3714.500 2022v19" stroke="#555" strokeWidth={2} />
          <rect x={3444} y={2031} width={248} height={3} fill="#b0b0b0" />
          <rect x={3562} y={2018} width={13} height={28} fill="#737373" />
        </Ico>
        <Zoom>100%</Zoom>
      </StatusBar>

      <TaskBar>
        <Start>
          <svg width={41} height={40} viewBox="0 0 41 40"><path d="M0 6l17-3v16H0zM18.500 2.700L41 0v19H18.500zM0 20.500h17V37L0 34.500zM18.500 20.500H41V40l-22.500-3z" fill="#fff" /></svg>
        </Start>
        <Search>
          <svg width={49} height={49} viewBox="0 0 49 49"><circle cx={31} cy={17} r={16} fill="none" stroke="#fff" strokeWidth={2.6} /><path d="M20 29L1 48" stroke="#fff" strokeWidth={2.8} /></svg>
          <SearchText>Type here to search</SearchText>
        </Search>
        <TaskView>
          <svg width={41} height={38} viewBox="0 0 41 38"><path d="M1 0v7h24V0M1 11h24v16H1zM1 38v-7h24v7M37.500 0v9M37.500 20v18" fill="none" stroke="#fff" strokeWidth={2} /><circle cx={37.5} cy={15} r={3.2} fill="#fff" /></svg>
        </TaskView>
        <Apps>
          <TaskApp $open>
            <svg width={62} height={60} viewBox="0 0 62 60">
              <defs>
                <linearGradient id="eg" x1="0" x2="1"><stop offset="0" stopColor="#35b4f2" /><stop offset=".55" stopColor="#2fc5cf" /><stop offset="1" stopColor="#5fe05a" /></linearGradient>
                <linearGradient id="eb" x1="0" x2="0.6" y2="1"><stop offset="0" stopColor="#1b9de0" /><stop offset="1" stopColor="#0c59a4" /></linearGradient>
              </defs>
              <path d="M1 28Q3 12 18 12q14 1 17 10-9-4-12 4-3 12 6 20 12 9 27 0-8 14-25 14Q2 58 1 28z" fill="url(#eb)" />
              <path d="M1 26Q6 1 31 0q28 2 30 25 0 14-15 15-10-1-9-5 4-3 2-10-3-9-13-11Q9 12 1 26z" fill="url(#eg)" />
              <circle cx={15} cy={44} r={15} fill="#a31a08" />
              <path d="M3 58l2-15 4 7 3-9 3 12 3-8 3 5 3-17 5 24-9 3z" fill="#c98a3c" />
              <path d="M6 57l2-8 3 6 2-7 4 9 5-8 2 7-8 3z" fill="#4a1d07" />
            </svg>
          </TaskApp>
          <TaskApp $open>
            <svg width={56} height={56} viewBox="0 0 56 56">
              <circle cx={28} cy={28} r={28} fill="#1da362" />
              <path d="M40.100 35L28 56a28 28 0 0024.200-42H28z" fill="#fecd41" />
              <path d="M28 14h24.200A28 28 0 003.800 14l12 21z" fill="#dd4f42" />
              <circle cx={28} cy={28} r={12.8} fill="#fff" /><circle cx={28} cy={28} r={10.2} fill="#4a89f3" />
            </svg>
          </TaskApp>
          <TaskApp>
            <svg width={54} height={54} viewBox="0 0 54 54">
              <path d="M0 54l4-14A27 27 0 1127 53q-7 0-13-3z" fill="#fff" />
              <circle cx={27.5} cy={26.5} r={22} fill="#27c04b" />
              <path d="M6 48l3-12 9 9z" fill="#27c04b" />
              <path d="M19 14q3-1 4 2l2 5q0 2-3 4 4 8 11 10l3-4q1-1 3 0l5 3q2 1 0 4-3 5-8 4-17-4-22-18-1-7 5-10z" fill="#fff" />
            </svg>
          </TaskApp>
          <TaskApp>
            <svg width={58} height={58} viewBox="0 0 58 58">
              <rect width={58} height={58} rx={15} fill="#4a8cff" />
              <path d="M11 20h21q5 1 5 5v14H17q-5-1-6-5zM38 27l8-7v18l-8-6z" fill="#fff" />
            </svg>
          </TaskApp>
          <TaskApp>
            <svg width={58} height={58} viewBox="0 0 58 58">
              <defs><linearGradient id="gh" x2="0" y2="1"><stop offset="0" stopColor="#a64cb4" /><stop offset="1" stopColor="#48206f" /></linearGradient></defs>
              <circle cx={29} cy={29} r={29} fill="#f4f4f4" />
              <circle cx={29} cy={29} r={27} fill="url(#gh)" />
              <path d="M15 13q4 0 7 3 7-1 14 0 4-3 7-3 2 5 1 8 3 4 3 9 0 11-11 12 1 1 1 4v11q-8 2-15 0V46q-7 2-10-4-1-3-4-4 3-1 6 3 3 3 8 1 0-2 1-3-11-1-11-12 0-5 3-7-1-4 0-7z" fill="#efefef" />
            </svg>
          </TaskApp>
          <TaskApp>
            <svg width={42} height={60} viewBox="0 0 42 60">
              <path d="M8 13q3-4 7-1l13 19 2-9q4-5 8-1 2 2 1 6l2 20-18 12-13-9Q3 42 5 37q0-5 3-6 2-5 7-6z" fill="#c0cb1f" stroke="#eef0b0" strokeWidth={1.2} />
              <path d="M11 28q7 3 9 9M8 34q7 4 9 9M6 40q6 3 9 7" fill="none" stroke="#8a9410" strokeWidth={1.5} />
              <circle cx={10} cy={9} r={7.2} fill="none" stroke="#f6e6c8" strokeWidth={3} />
              <circle cx={10} cy={9} r={4.6} fill="#a9bf2c" stroke="#55543a" strokeWidth={1.3} />
            </svg>
          </TaskApp>
          <TaskApp>
            <svg width={61} height={60} viewBox="0 0 61 60">
              <rect width={61} height={60} rx={23} fill="#f26c3d" />
              <text x={30.5} y={38} textAnchor="middle" fontFamily={UI} fontSize={21} fontWeight={700} fill="#fff" letterSpacing={-0.8}>DeX</text>
            </svg>
          </TaskApp>
          <TaskApp>
            <svg width={57} height={55} viewBox="0 0 57 55">
              <rect x={1.2} y={1.2} width={54.6} height={52.6} fill="#230404" stroke="#f0190a" strokeWidth={2.6} />
              <path d="M13 43c-3-3 6-9 14-11s18-1 18 2-7 3-12-2-8-14-7-19 4-3 4 1c-1 8-12 29-17 29z" fill="none" stroke="#fff" strokeWidth={1.8} />
            </svg>
          </TaskApp>
          <TaskApp $open>
            <svg width={53} height={46} viewBox="0 0 53 46">
              <path d="M2 0h18l5 6v10H0V2z" fill="#e0a000" />
              <path d="M0 10h22l4-5h25q2 0 2 2v34q0 2-2 2H2q-2 0-2-2z" fill="#fdd05a" />
              <path d="M0 30h53v11q0 2-2 2H2q-2 0-2-2z" fill="#fcc93c" />
              <path d="M9 46V27q0-4 4-4h27q4 0 4 4v19h-8V32H18v14z" fill="#3b95dc" />
            </svg>
          </TaskApp>
          <TaskApp $open>
            <Office letter="O" dark="#1170cf">
              <rect x={18} y={1} width={40} height={30} rx={1.5} fill="#0a5ba8" />
              <rect x={18} y={10} width={13} height={12} fill="#1382d8" /><rect x={31} y={10} width={14} height={12} fill="#2fa8ec" /><rect x={45} y={10} width={13} height={12} fill="#52d5fd" />
              <rect x={31} y={22} width={14} height={12} fill="#0b76d2" /><rect x={45} y={22} width={13} height={12} fill="#2ba5e8" />
              <path d="M14 30l24 12 21-14v25q0 2-2 2H16q-2 0-2-2z" fill="#2aa2ec" />
              <path d="M59 28v25q0 2-2 2L34 41z" fill="#1d86d9" />
            </Office>
          </TaskApp>
          <TaskApp $open>
            <Office letter="X" dark="#117d43">
              <rect x={14} y={1} width={45} height={54} rx={1.5} fill="#185c37" />
              <path d="M14 3q0-2 2-2h21v13H14zM14 14h23v14H14z" fill="#21a366" /><path d="M37 1h20q2 0 2 2v11H37z" fill="#33c481" />
              <rect x={37} y={14} width={22} height={14} fill="#21a366" /><rect x={37} y={28} width={22} height={13} fill="#107c41" />
            </Office>
          </TaskApp>
        </Apps>
        <TraySlot $w={81}><svg width={32} height={18} viewBox="0 0 32 18"><path d="M1 17L16 2l15 15" fill="none" stroke="#fff" strokeWidth={2.2} /></svg></TraySlot>
        <TraySlot><Cloud a="#0364b8" b="#0078d4" c="#1490df" d="#28a8ea" /></TraySlot>
        <TraySlot><Cloud a="#8f8f8f" b="#b5b5b5" c="#dcdcdc" d="#fff" /></TraySlot>
        <TraySlot>
          <svg width={40} height={34} viewBox="0 0 40 34"><path d="M10 0l10 6-10 6L0 6zM30 0l10 6-10 6-10-6zM10 12l10 6-10 6-10-6zM30 12l10 6-10 6-10-6zM20 23l10 5.500L20 34l-10-5.500z" fill="#fff" /></svg>
        </TraySlot>
        <TraySlot>
          <svg width={40} height={28} viewBox="0 0 40 28"><path d="M12 6.500h25v20H9M38.500 13v6M3 0v5M9 0v5M1 5h10v8l-3 3H4l-3-3zM6 16v11" fill="none" stroke="#fff" strokeWidth={2} /><path d="M15 10h18v14H11v-6z" fill="#fff" /></svg>
        </TraySlot>
        <TraySlot $w={86}>
          <svg width={30} height={31} viewBox="0 0 30 31"><path d="M1 30Q3 5 30 1M9 30q2-18 21-20M18 30q1-10 12-12" fill="none" stroke="#e8e8e8" strokeWidth={2} /><circle cx={27} cy={27} r={3} fill="#fff" /></svg>
        </TraySlot>
        <TraySlot $w={72}>
          <svg width={41} height={37} viewBox="0 0 41 37"><path d="M1 12h6l7-8v29l-7-8H1zM21 12q4 6 0 13M27 7q7 11 0 23M33 2q11 16 0 33" fill="none" stroke="#fff" strokeWidth={2} /></svg>
        </TraySlot>
        <TraySlot $w={82}><UpCloud /></TraySlot>
        <TraySlot><UpCloud /></TraySlot>
        <TraySlot><UpCloud /></TraySlot>
        <TraySlot $w={86}><TrayText>ENG</TrayText></TraySlot>
        <Clock>9:28 AM<br />21/04/20</Clock>
        <Ico box={[3737, 2060, 62, 100]} ml={22}>
          <path d="M3737 2090h40v34h-13l-8 7v-7h-19z" fill="#fff" />
          <path d="M3745 2099.500h24M3745 2107.500h24M3745 2115.500h14" stroke="#1e1e1e" strokeWidth={2.2} />
          <circle cx={3775.5} cy={2128} r={20} fill="#333" stroke="#8a8a8a" strokeWidth={1.8} />
          <path d="M3758 2137a20 20 0 0119-28v10z" fill="#8a8a8a" />
          <text x={3775.5} y={2138} textAnchor="middle" fontFamily={UI} fontSize={27} fontWeight={600} fill="#fff">9</text>
        </Ico>
        <Ico box={[3827, 2060, 3, 100]} ml={28}><rect x={3827} y={2060} width={2} height={100} fill="#777" /></Ico>
      </TaskBar>
    </Window>
  );
}
